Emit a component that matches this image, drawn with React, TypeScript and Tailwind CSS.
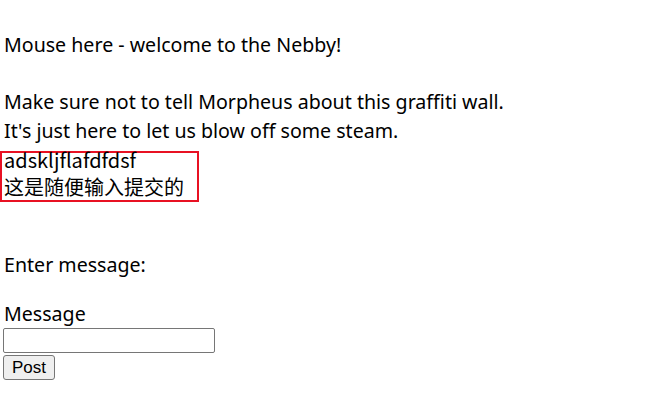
import React, { useState } from 'react';

const App: React.FC = () => {
  const [message, setMessage] = useState('');

  return (
    <div className="min-h-[400px] bg-white text-black" style={{ fontFamily: '"Noto Sans", sans-serif' }}>
      <p className="pt-[30px] pl-[4px] text-[19.6px] leading-[29px]">Mouse here - welcome to the Nebby!</p>
      <p className="mt-[28px] pl-[4px] text-[19.6px] leading-[29px]">
        Make sure not to tell Morpheus about this graffiti wall.
        <br />
        It's just here to let us blow off some steam.
      </p>
      <div
        className="mt-[6px] w-[199px] h-[51px] border-2 border-[#e81123] pl-[2px] text-[20px] leading-[27px]"
        style={{ fontFamily: '"Noto Sans CJK SC", sans-serif' }}
      >
        <div className="-mt-[7px]">adskljflafdfdsf</div>
        <div>这是随便输入提交的</div>
      </div>
      <form
        className="pl-[3px]"
        onSubmit={(e) => {
          e.preventDefault();
          setMessage('');
        }}
      >
        <p className="mt-[48px] pl-[1px] text-[19.6px] leading-[29px]">Enter message:</p>
        <label htmlFor="msg" className="block mt-[21px] pl-[1px] text-[19.6px] leading-[28px]">
          Message
        </label>
        <input
          id="msg"
          type="text"
          value={message}
          onChange={(e) => setMessage(e.target.value)}
          className="block w-[212px] h-[25px] border border-[#767676] rounded-[2px] bg-white px-[2px] text-[13px]"
        />
        <button
          type="submit"
          className="block mt-[2px] w-[52px] h-[25px] border border-[#767676] rounded-[3px] bg-[#efefef] text-[17px] leading-[20px] text-black"
          style={{ fontFamily: '"Liberation Sans", Arial, sans-serif' }}
        >
          Post
        </button>
      </form>
    </div>
  );
};

export default App;
